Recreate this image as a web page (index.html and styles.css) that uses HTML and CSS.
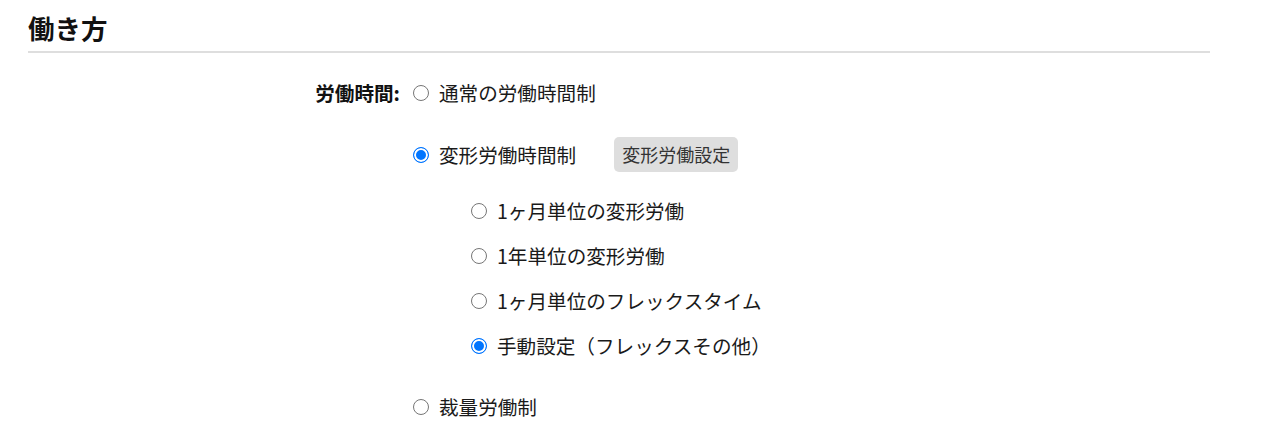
FILE: index.html
```html
<!DOCTYPE html>
<html lang="ja">
<head>
<meta charset="utf-8">
<title>働き方</title>
<link rel="stylesheet" href="styles.css">
</head>
<body>
<section class="section">
  <h2 class="section-title">働き方</h2>
  <div class="field">
    <div class="field-label">労働時間:</div>
    <div class="options">
      <label class="opt opt-first"><input class="radio" type="radio" name="wt"><span>通常の労働時間制</span></label>
      <div class="opt opt-second">
        <label class="opt-inner"><input class="radio" type="radio" name="wt" checked><span>変形労働時間制</span></label>
        <button class="btn" type="button">変形労働設定</button>
      </div>
      <div class="sub-options">
        <label class="opt"><input class="radio" type="radio" name="sub"><span>1ヶ月単位の変形労働</span></label>
        <label class="opt"><input class="radio" type="radio" name="sub"><span>1年単位の変形労働</span></label>
        <label class="opt"><input class="radio" type="radio" name="sub"><span>1ヶ月単位のフレックスタイム</span></label>
        <label class="opt"><input class="radio" type="radio" name="sub" checked><span>手動設定（フレックスその他）</span></label>
      </div>
      <label class="opt opt-last"><input class="radio" type="radio" name="wt"><span>裁量労働制</span></label>
    </div>
  </div>
</section>
</body>
</html>
```

FILE: styles.css
```css
html, body {
  margin: 0;
  padding: 0;
  background: #ffffff;
}

body {
  font-family: "Noto Sans CJK JP", "Noto Sans", sans-serif;
  color: #1a1a1a;
}

.section {
  width: 1182px;
  padding: 10px 0 0 28px;
}

.section-title {
  margin: 0;
  font-size: 26.5px;
  line-height: 36px;
  font-weight: 700;
  color: #111;
  padding-bottom: 5px;
  border-bottom: 2px solid #dedede;
}

.field {
  display: grid;
  grid-template-columns: 372px 1fr;
  column-gap: 13px;
  margin-top: 26px;
}

.field-label {
  text-align: right;
  font-size: 19.6px;
  line-height: 28px;
  font-weight: 700;
  color: #111;
}

.options {
  display: flex;
  flex-direction: column;
  font-size: 19.6px;
  line-height: 28px;
}

.opt,
.opt-inner {
  display: flex;
  align-items: center;
  height: 28px;
}

.radio {
  appearance: none;
  -webkit-appearance: none;
  box-sizing: border-box;
  width: 16px;
  height: 16px;
  margin: 0 10px 0 0;
  border: 1.5px solid #767676;
  border-radius: 50%;
  background: #fff;
  flex: none;
}

.radio:checked {
  border: 1.8px solid #0075ff;
  background: #0075ff;
  box-shadow: inset 0 0 0 2px #fff;
}

.opt-second {
  height: 35px;
  margin-top: 30px;
  gap: 38px;
}

.btn {
  height: 35px;
  padding: 0 8px;
  border: none;
  border-radius: 5px;
  background: #dedede;
  color: #333;
  font-family: "Noto Sans CJK JP", "Noto Sans", sans-serif;
  font-size: 18px;
  line-height: 35px;
}

.sub-options {
  display: flex;
  flex-direction: column;
  gap: 17px;
  margin-top: 25px;
  padding-left: 58px;
}

.opt-last {
  margin-top: 33px;
}
```
